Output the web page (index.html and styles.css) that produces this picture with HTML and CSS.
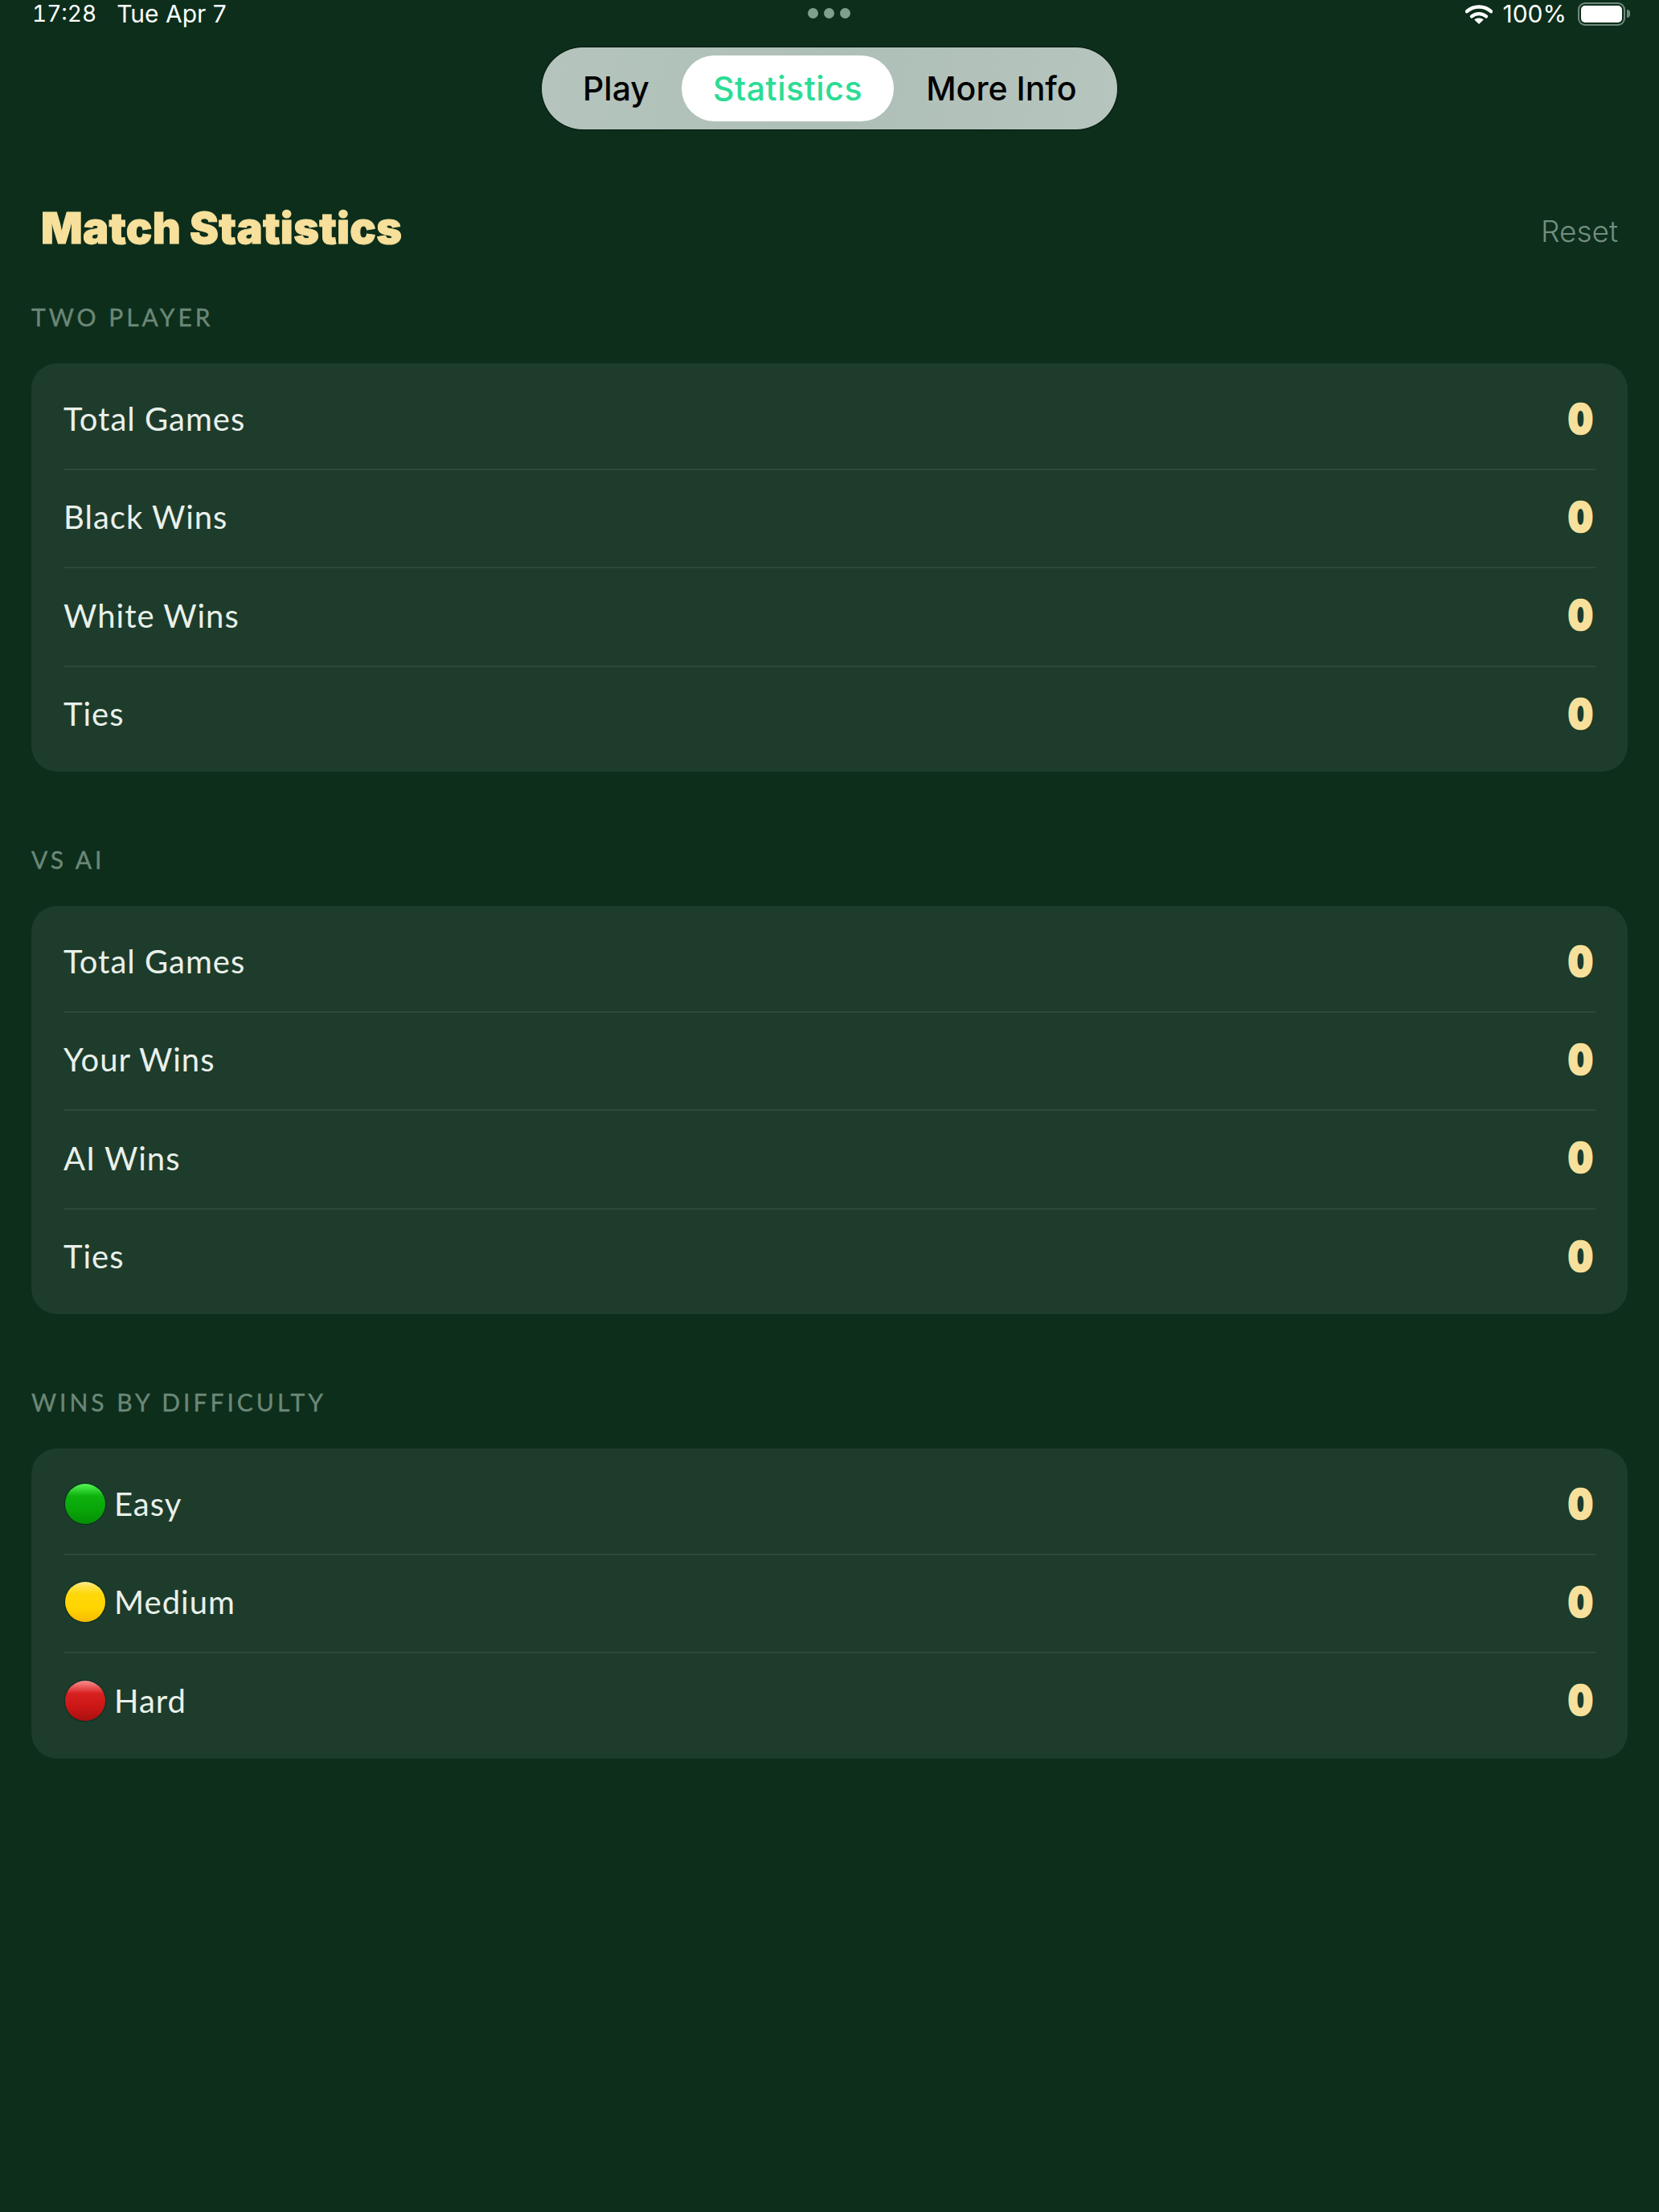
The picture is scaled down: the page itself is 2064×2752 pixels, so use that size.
FILE: index.html
```html
<!DOCTYPE html>
<html lang="en">
<head>
<meta charset="utf-8">
<title>Match Statistics</title>
<link rel="stylesheet" href="styles.css">
</head>
<body>
<div class="status">
  <div class="status-left"><span class="time">17:28</span><span>Tue Apr 7</span></div>
  <div class="status-dots"><i></i><i></i><i></i></div>
  <div class="status-right">
    <svg class="wifi" viewBox="0 0 34 25" width="34" height="25" aria-hidden="true">
      <path d="M2 9.2C10.5 1.6 23.5 1.6 32 9.2" fill="none" stroke="#fff" stroke-width="4.4" stroke-linecap="round"/>
      <path d="M8 15.4C13.2 11 20.8 11 26 15.4" fill="none" stroke="#fff" stroke-width="4.4" stroke-linecap="round"/>
      <path d="M17 25L11.2 19.4C14.6 16.8 19.4 16.8 22.8 19.4Z" fill="#fff"/>
    </svg>
    <span>100%</span>
    <div class="battery"><div class="battery-fill"></div></div>
    <div class="battery-tip"></div>
  </div>
</div>

<nav class="nav">
  <div class="nav-item">Play</div>
  <div class="nav-item active">Statistics</div>
  <div class="nav-item">More Info</div>
</nav>

<header class="header">
  <h1 class="title">Match Statistics</h1>
  <div class="reset">Reset</div>
</header>

<section class="section">
  <h2 class="label">TWO PLAYER</h2>
  <div class="card">
    <div class="row"><span class="name">Total Games</span><span class="value">0</span></div>
    <div class="row"><span class="name">Black Wins</span><span class="value">0</span></div>
    <div class="row"><span class="name">White Wins</span><span class="value">0</span></div>
    <div class="row"><span class="name">Ties</span><span class="value">0</span></div>
  </div>
</section>

<section class="section">
  <h2 class="label">VS AI</h2>
  <div class="card">
    <div class="row"><span class="name">Total Games</span><span class="value">0</span></div>
    <div class="row"><span class="name">Your Wins</span><span class="value">0</span></div>
    <div class="row"><span class="name">AI Wins</span><span class="value">0</span></div>
    <div class="row"><span class="name">Ties</span><span class="value">0</span></div>
  </div>
</section>

<section class="section">
  <h2 class="label">WINS BY DIFFICULTY</h2>
  <div class="card">
    <div class="row"><span class="name"><i class="orb green"></i>Easy</span><span class="value">0</span></div>
    <div class="row"><span class="name"><i class="orb yellow"></i>Medium</span><span class="value">0</span></div>
    <div class="row"><span class="name"><i class="orb red"></i>Hard</span><span class="value">0</span></div>
  </div>
</section>
</body>
</html>
```
FILE: styles.css
```css
* { box-sizing: border-box; }
html, body { margin: 0; padding: 0; }
body {
  width: 2064px;
  height: 2752px;
  overflow: hidden;
  background: #0c2e1b;
  font-family: "Lato", "Noto Sans", sans-serif;
  color: #e9f0ea;
}

.status {
  position: relative;
  height: 34px;
  margin-bottom: 25px;
  padding: 0 36px 0 40px;
  display: flex;
  justify-content: space-between;
  align-items: center;
  font-family: "Inter", "Liberation Sans", sans-serif;
  font-size: 30px;
  line-height: 34px;
  color: #fff;
}
.status-left { display: flex; gap: 25px; }
.time { font-size: 28px; font-variant-numeric: tabular-nums; }
.status-dots {
  position: absolute;
  top: 10px;
  left: 1005px;
  display: flex;
  gap: 7px;
}
.status-dots i {
  display: block;
  width: 13px;
  height: 13px;
  border-radius: 50%;
  background: #7fa08d;
}
.status-right { display: flex; align-items: center; }
.wifi { margin-right: 12px; }
.battery {
  width: 59px;
  height: 29px;
  margin-left: 14px;
  padding: 2px;
  border: 2px solid #6f8a7c;
  border-radius: 9px;
}
.battery-fill {
  width: 100%;
  height: 100%;
  background: #fff;
  border-radius: 5px;
}
.battery-tip {
  width: 4px;
  height: 10px;
  margin-left: 2px;
  background: #6f8a7c;
  border-radius: 0 4px 4px 0;
}

.nav {
  width: 716px;
  height: 102px;
  margin: 0 auto;
  padding: 10px 12px 10px 11px;
  display: flex;
  justify-content: space-between;
  border-radius: 51px;
  background: linear-gradient(100deg, #b5c5be, #aebfb8 50%, #b6c5be);
  box-shadow: 0 0 0 1px #06170d;
}
.nav-item {
  padding: 0 40px;
  font-family: "Inter", "Liberation Sans", sans-serif;
  font-size: 41px;
  font-weight: 500;
  line-height: 82px;
  color: #000;
  white-space: nowrap;
}
.nav-item.active {
  padding: 0 39px;
  background: #fff;
  border-radius: 41px;
  letter-spacing: .6px;
  color: #2bdc94;
}

.header {
  height: 70px;
  margin: 88px 0 57px;
  padding: 0 51px;
  display: flex;
  justify-content: space-between;
  align-items: center;
}
.title {
  margin: 0;
  font-family: "Inter", "Lato", sans-serif;
  font-size: 54px;
  font-weight: 900;
  line-height: 70px;
  letter-spacing: .3px;
  color: #f7e09b;
  -webkit-text-stroke: 1px #f7e09b;
}
.reset {
  padding-top: 6px;
  font-family: "Inter", "Liberation Sans", sans-serif;
  font-size: 37px;
  font-weight: 300;
  color: #728d7f;
}

.section { margin: 0 39px 91px; }
.label {
  margin: 0 0 40px;
  font-size: 30px;
  font-weight: 400;
  line-height: 36px;
  letter-spacing: 4px;
  color: #6c8777;
  -webkit-text-stroke: .4px #6c8777;
}
.card {
  padding: 8px 40px 10px;
  border-radius: 32px;
  background: #1e3c2b;
}
.row {
  height: 122.5px;
  display: flex;
  justify-content: space-between;
  align-items: center;
  border-top: 2px solid #2d4938;
  padding-bottom: 3px;
}
.row:first-child { border-top: 0; padding-bottom: 0; }
.name {
  display: flex;
  align-items: center;
  font-size: 40px;
  letter-spacing: 1px;
  color: #e9f0ea;
}
.value {
  display: inline-block;
  margin-right: 1px;
  font-family: "Inter", "Lato", sans-serif;
  font-size: 49px;
  font-weight: 900;
  line-height: 1;
  color: #f7e09b;
  -webkit-text-stroke: 2.5px #f7e09b;
  text-shadow: 0 0 3px #06281c;
  transform: scaleX(.88);
}
.orb {
  display: block;
  width: 50px;
  height: 50px;
  margin: 0 11px 0 2px;
  border-radius: 50%;
  box-shadow: 0 0 1px 1px rgba(0, 40, 30, .7);
}
.orb.green { background: linear-gradient(#56f556 0, #3ee03e 10%, #0eb20e 30%, #08a508 65%, #058e06 100%); }
.orb.yellow { background: linear-gradient(#ffec90 0, #ffe24a 12%, #ffd80a 30%, #ffd400 65%, #f6ba00 100%); }
.orb.red { background: linear-gradient(#f79090 0, #ee6666 12%, #d82020 32%, #cc1616 65%, #a81010 100%); }
```
